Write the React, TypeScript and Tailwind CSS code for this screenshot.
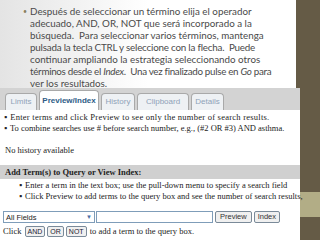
import React from "react";

const serif = { fontFamily: '"Liberation Serif", "Times New Roman", serif' };
const sans = { fontFamily: '"Liberation Sans", Arial, sans-serif' };

const Tab: React.FC<{ label: string; active?: boolean; w: string }> = ({ label, active, w }) => (
  <div
    className={`${w} flex items-end justify-center rounded-t-[4px] border border-b-0 border-[#a9a9a9] ${
      active
        ? "h-[20px] bg-white pb-[3px] font-bold text-[#2d5b86]"
        : "h-[17px] bg-[#eef1f4] pb-[2px] text-[#8ea2b8]"
    }`}
  >
    {label}
  </div>
);

const SmallBtn: React.FC<{ label: string }> = ({ label }) => (
  <span className="mx-[1px] inline-block rounded-[2px] border border-[#7a8a99] bg-[#f0f0f0] px-[2px] text-[7px] leading-[9px] text-[#223]" style={sans}>
    {label}
  </span>
);

export default function App() {
  return (
    <div className="flex h-[240px] w-[320px] overflow-hidden bg-white">
      <div className="relative z-10 mr-[-4px] flex w-[300px] flex-col">
        {/* slide text */}
        <div className="h-[88px] w-[296px] bg-gradient-to-r from-[#e4e4e4] via-white to-white pl-[23px] pt-[5px]">
          <div className="flex gap-[3px] text-[9.8px] leading-[12px] text-[#4a4a4a]" style={{ fontFamily: 'Lato, "Open Sans", sans-serif' }}>
            <span className="text-[7px] text-[#8a8060]">•</span>
            <div className="whitespace-nowrap">
              <div>Después de seleccionar un término elija el operador</div>
              <div>adecuado, AND, OR, NOT que será incorporado a la</div>
              <div>búsqueda.&nbsp; Para seleccionar varios términos, mantenga</div>
              <div className="tracking-[-0.2px]">pulsada la tecla CTRL y seleccione con la flecha.&nbsp; Puede</div>
              <div>continuar ampliando la estrategia seleccionando otros</div>
              <div className="tracking-[-0.3px]">
                términos desde el <i>Index</i>.&nbsp; Una vez finalizado pulse en <i>Go</i> para
              </div>
              <div>ver los resultados.</div>
            </div>
          </div>
        </div>

        {/* screenshot */}
        <div className="flex flex-1 flex-col bg-white">
          <div className="flex h-[22px] items-end gap-[2px] bg-[#d3d3d3] pl-[5px] text-[8px]" style={sans}>
            <Tab label="Limits" w="w-[32px]" />
            <Tab label="Preview/Index" w="w-[60px]" active />
            <Tab label="History" w="w-[34px]" />
            <Tab label="Clipboard" w="w-[52px]" />
            <Tab label="Details" w="w-[33px]" />
          </div>
          <div className="whitespace-nowrap text-[8.5px] leading-[11px] text-[#222]" style={serif}>
            <ul className="pl-[4px] pt-[2px]">
              <li className="flex gap-[3px] tracking-[0.25px]"><span>▪</span>Enter terms and click Preview to see only the number of search results.</li>
              <li className="flex gap-[3px]"><span>▪</span>To combine searches use # before search number, e.g., (#2 OR #3) AND asthma.</li>
            </ul>
            <p className="pl-[5px] pt-[11px]">No history available</p>
            <div className="mt-[9px] h-[14px] bg-[#d0d0d0] pl-[5px] font-bold leading-[14px]">Add Term(s) to Query or View Index:</div>
            <ul className="pl-[19px] pt-[1px]">
              <li className="flex gap-[3px]"><span>▪</span>Enter a term in the text box; use the pull-down menu to specify a search field</li>
              <li className="flex gap-[3px]"><span>▪</span>Click Preview to add terms to the query box and see the number of search results,</li>
            </ul>
            <div className="mt-[9px] flex items-center gap-[1px] pl-[3px]">
              <div className="flex h-[12px] w-[92px] items-center justify-between border border-[#7f9db9] bg-white pl-[2px] text-[7.5px]" style={sans}>
                <span>All Fields</span>
                <span className="flex h-[10px] w-[10px] items-center justify-center text-[6px] text-[#4a6fa5]">▼</span>
              </div>
              <div className="h-[12px] w-[117px] border border-[#7f9db9] bg-white" />
              <span className="ml-[1px] inline-block h-[12px] rounded-[2px] border border-[#7a8a99] bg-[#f0f0f0] px-[4px] text-[7.5px] leading-[10px] text-[#333]" style={sans}>Preview</span>
              <span className="ml-[1px] inline-block h-[12px] rounded-[2px] border border-[#7a8a99] bg-[#f0f0f0] px-[3px] text-[7.5px] leading-[10px] text-[#333]" style={sans}>Index</span>
            </div>
            <p className="pl-[3px] pt-[3px]">
              Click <SmallBtn label="AND" />
              <SmallBtn label="OR" />
              <SmallBtn label="NOT" /> to add a term to the query box.
            </p>
          </div>
        </div>
      </div>

      {/* slide side strip */}
      <div className="flex w-[24px] flex-col bg-[#655b46]">
        <div className="h-[192px]" />
        <div className="h-[25px] bg-[#b2ad86]" />
      </div>
    </div>
  );
}
